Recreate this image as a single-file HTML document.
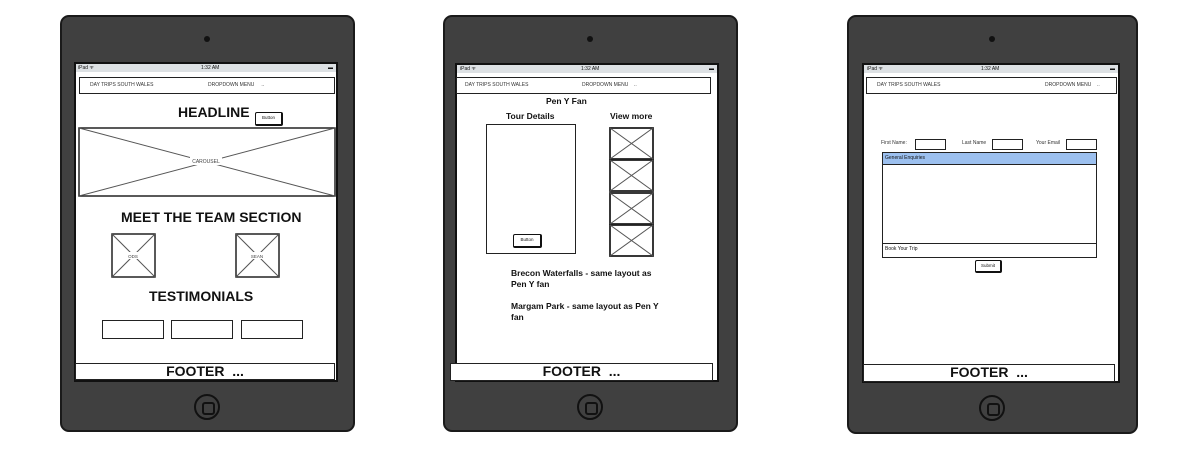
<!DOCTYPE html>
<html><head><meta charset="utf-8"><style>
*{margin:0;padding:0;box-sizing:border-box}
body{width:1183px;height:460px;background:#fff;position:relative;overflow:hidden;font-family:"Liberation Sans",sans-serif;color:#111}
.a{position:absolute}
.ipad{position:absolute;background:#404040;border:2px solid #1a1a1a;border-radius:9px}
.cam{position:absolute;width:6px;height:6px;border-radius:50%;background:#111}
.home{position:absolute;width:26px;height:26px;border-radius:50%;border:2.5px solid #111}
.home:after{content:"";position:absolute;left:6px;top:6px;width:9px;height:9px;border:2px solid #111;border-radius:3px}
.scr{position:absolute;background:#fff;border:2px solid #111}
.sb{position:absolute;left:0;right:0;top:0;height:8px;background:#dde1e4;font-size:5px;line-height:8px}
.nav{position:absolute;border:1.5px solid #222;background:#fff;font-size:5px;line-height:15px;color:#333}
.box{position:absolute;border:1.5px solid #222;background:#fff}
.foot{position:absolute;border:1.5px solid #222;background:#fff;font-weight:bold;font-size:14px;text-align:center;line-height:15px}
.b{font-weight:bold}
.btn{position:absolute;border:1.5px solid #111;border-right-width:2.5px;border-bottom-width:2.5px;background:#fff;font-size:4.5px;text-align:center;border-radius:2px}
</style></head><body>

<!-- iPad 1 -->
<div class="ipad" style="left:60px;top:15px;width:295px;height:417px"></div>
<div class="cam" style="left:204px;top:36px"></div>
<div class="home" style="left:194px;top:394px"></div>
<div class="scr" style="left:74px;top:62px;width:264px;height:320px">
 <div class="sb"><span style="position:absolute;left:2px">iPad ᯤ</span><span style="position:absolute;left:125px">1:32 AM</span><span style="position:absolute;right:3px">▬</span></div>
</div>
<div class="nav" style="left:79px;top:77px;width:256px;height:17px"><span class="a" style="left:10px">DAY TRIPS SOUTH WALES</span><span class="a" style="left:128px">DROPDOWN MENU &nbsp;&nbsp;&nbsp;&nbsp;..</span></div>
<div class="a b" style="left:178px;top:104px;font-size:14px">HEADLINE</div>
<div class="btn" style="left:255px;top:112px;width:28px;height:14px;line-height:10px">Button</div>
<svg class="a" style="left:78px;top:127px" width="258" height="70"><rect x="1" y="1" width="256" height="68" fill="#fff" stroke="#222" stroke-width="1.5"/><line x1="1" y1="1" x2="257" y2="69" stroke="#555"/><line x1="257" y1="1" x2="1" y2="69" stroke="#555"/><rect x="112" y="29" width="32" height="9" fill="#fff"/><text x="128" y="36" font-size="5" text-anchor="middle" fill="#444" font-family="Liberation Sans">CAROUSEL</text></svg>
<div class="a b" style="left:121px;top:209px;font-size:14px">MEET THE TEAM SECTION</div>
<svg class="a" style="left:111px;top:233px" width="46" height="46"><rect x="1" y="1" width="43" height="43" fill="#fff" stroke="#222" stroke-width="1.5"/><line x1="1" y1="1" x2="44" y2="44" stroke="#555"/><line x1="44" y1="1" x2="1" y2="44" stroke="#555"/><rect x="14" y="19" width="17" height="7" fill="#fff"/><text x="22" y="25" font-size="4.5" text-anchor="middle" fill="#444">ODS</text></svg>
<svg class="a" style="left:235px;top:233px" width="46" height="46"><rect x="1" y="1" width="43" height="43" fill="#fff" stroke="#222" stroke-width="1.5"/><line x1="1" y1="1" x2="44" y2="44" stroke="#555"/><line x1="44" y1="1" x2="1" y2="44" stroke="#555"/><rect x="13" y="19" width="19" height="7" fill="#fff"/><text x="22" y="25" font-size="4.5" text-anchor="middle" fill="#444">SEAN</text></svg>
<div class="a b" style="left:149px;top:288px;font-size:14px">TESTIMONIALS</div>
<div class="box" style="left:102px;top:320px;width:62px;height:19px"></div>
<div class="box" style="left:171px;top:320px;width:62px;height:19px"></div>
<div class="box" style="left:241px;top:320px;width:62px;height:19px"></div>
<div class="foot" style="left:75px;top:363px;width:260px;height:17px">FOOTER &nbsp;...</div>

<!-- iPad 2 -->
<div class="ipad" style="left:443px;top:15px;width:295px;height:417px"></div>
<div class="cam" style="left:587px;top:36px"></div>
<div class="home" style="left:577px;top:394px"></div>
<div class="scr" style="left:455px;top:63px;width:264px;height:319px">
 <div class="sb"><span style="position:absolute;left:3px">iPad ᯤ</span><span style="position:absolute;left:124px">1:32 AM</span><span style="position:absolute;right:3px">▬</span></div>
</div>
<div class="nav" style="left:456px;top:77px;width:255px;height:17px"><span class="a" style="left:8px">DAY TRIPS SOUTH WALES</span><span class="a" style="left:125px">DROPDOWN MENU &nbsp;&nbsp;&nbsp;..</span></div>
<div class="a b" style="left:546px;top:96px;font-size:8.5px">Pen Y Fan</div>
<div class="a b" style="left:506px;top:111px;font-size:8.5px">Tour Details</div>
<div class="a b" style="left:610px;top:111px;font-size:8.5px">View more</div>
<div class="box" style="left:486px;top:124px;width:90px;height:130px"></div>
<div class="btn" style="left:513px;top:234px;width:29px;height:14px;line-height:10px">Button</div>
<svg class="a" style="left:609px;top:127px" width="46" height="132">
<g fill="#fff" stroke="#222" stroke-width="1.8"><rect x="1" y="1" width="43" height="31"/><rect x="1" y="33" width="43" height="31"/><rect x="1" y="66" width="43" height="31"/><rect x="1" y="98" width="43" height="31"/></g>
<g stroke="#555"><path d="M1 1L44 32M44 1L1 32M1 33L44 64M44 33L1 64M1 66L44 97M44 66L1 97M1 98L44 129M44 98L1 129"/></g></svg>
<div class="a b" style="left:511px;top:268px;font-size:8.5px;line-height:11px;width:152px">Brecon Waterfalls - same layout as Pen Y fan</div>
<div class="a b" style="left:511px;top:301px;font-size:8.5px;line-height:11px;width:152px">Margam Park - same layout as Pen Y fan</div>
<div class="foot" style="left:450px;top:363px;width:263px;height:18px">FOOTER &nbsp;...</div>

<!-- iPad 3 -->
<div class="ipad" style="left:847px;top:15px;width:291px;height:419px"></div>
<div class="cam" style="left:989px;top:36px"></div>
<div class="home" style="left:979px;top:395px"></div>
<div class="scr" style="left:862px;top:63px;width:258px;height:320px">
 <div class="sb"><span style="position:absolute;left:3px">iPad ᯤ</span><span style="position:absolute;left:117px">1:32 AM</span><span style="position:absolute;right:3px">▬</span></div>
</div>
<div class="nav" style="left:866px;top:77px;width:251px;height:17px"><span class="a" style="left:10px">DAY TRIPS SOUTH WALES</span><span class="a" style="left:178px">DROPDOWN MENU &nbsp;&nbsp;&nbsp;..</span></div>
<div class="a" style="left:881px;top:140px;font-size:5px;color:#333">First Name:</div>
<div class="box" style="left:915px;top:139px;width:31px;height:11px"></div>
<div class="a" style="left:962px;top:140px;font-size:5px;color:#333">Last Name</div>
<div class="box" style="left:992px;top:139px;width:31px;height:11px"></div>
<div class="a" style="left:1036px;top:140px;font-size:5px;color:#333">Your Email</div>
<div class="box" style="left:1066px;top:139px;width:31px;height:11px"></div>
<div class="box" style="left:882px;top:152px;width:215px;height:106px"></div>
<div class="a" style="left:883px;top:153px;width:213px;height:12px;background:#9cc0ef;border-bottom:1.5px solid #222;font-size:5px;line-height:11px;padding-left:2px">General Enquiries</div>
<div class="a" style="left:883px;top:243px;width:213px;height:13px;border-top:1.5px solid #222;font-size:5px;line-height:11px;padding-left:2px">Book Your Trip</div>
<div class="btn" style="left:975px;top:260px;width:27px;height:13px;line-height:9px">Submit</div>
<div class="foot" style="left:863px;top:364px;width:252px;height:18px">FOOTER &nbsp;...</div>
</body></html>
